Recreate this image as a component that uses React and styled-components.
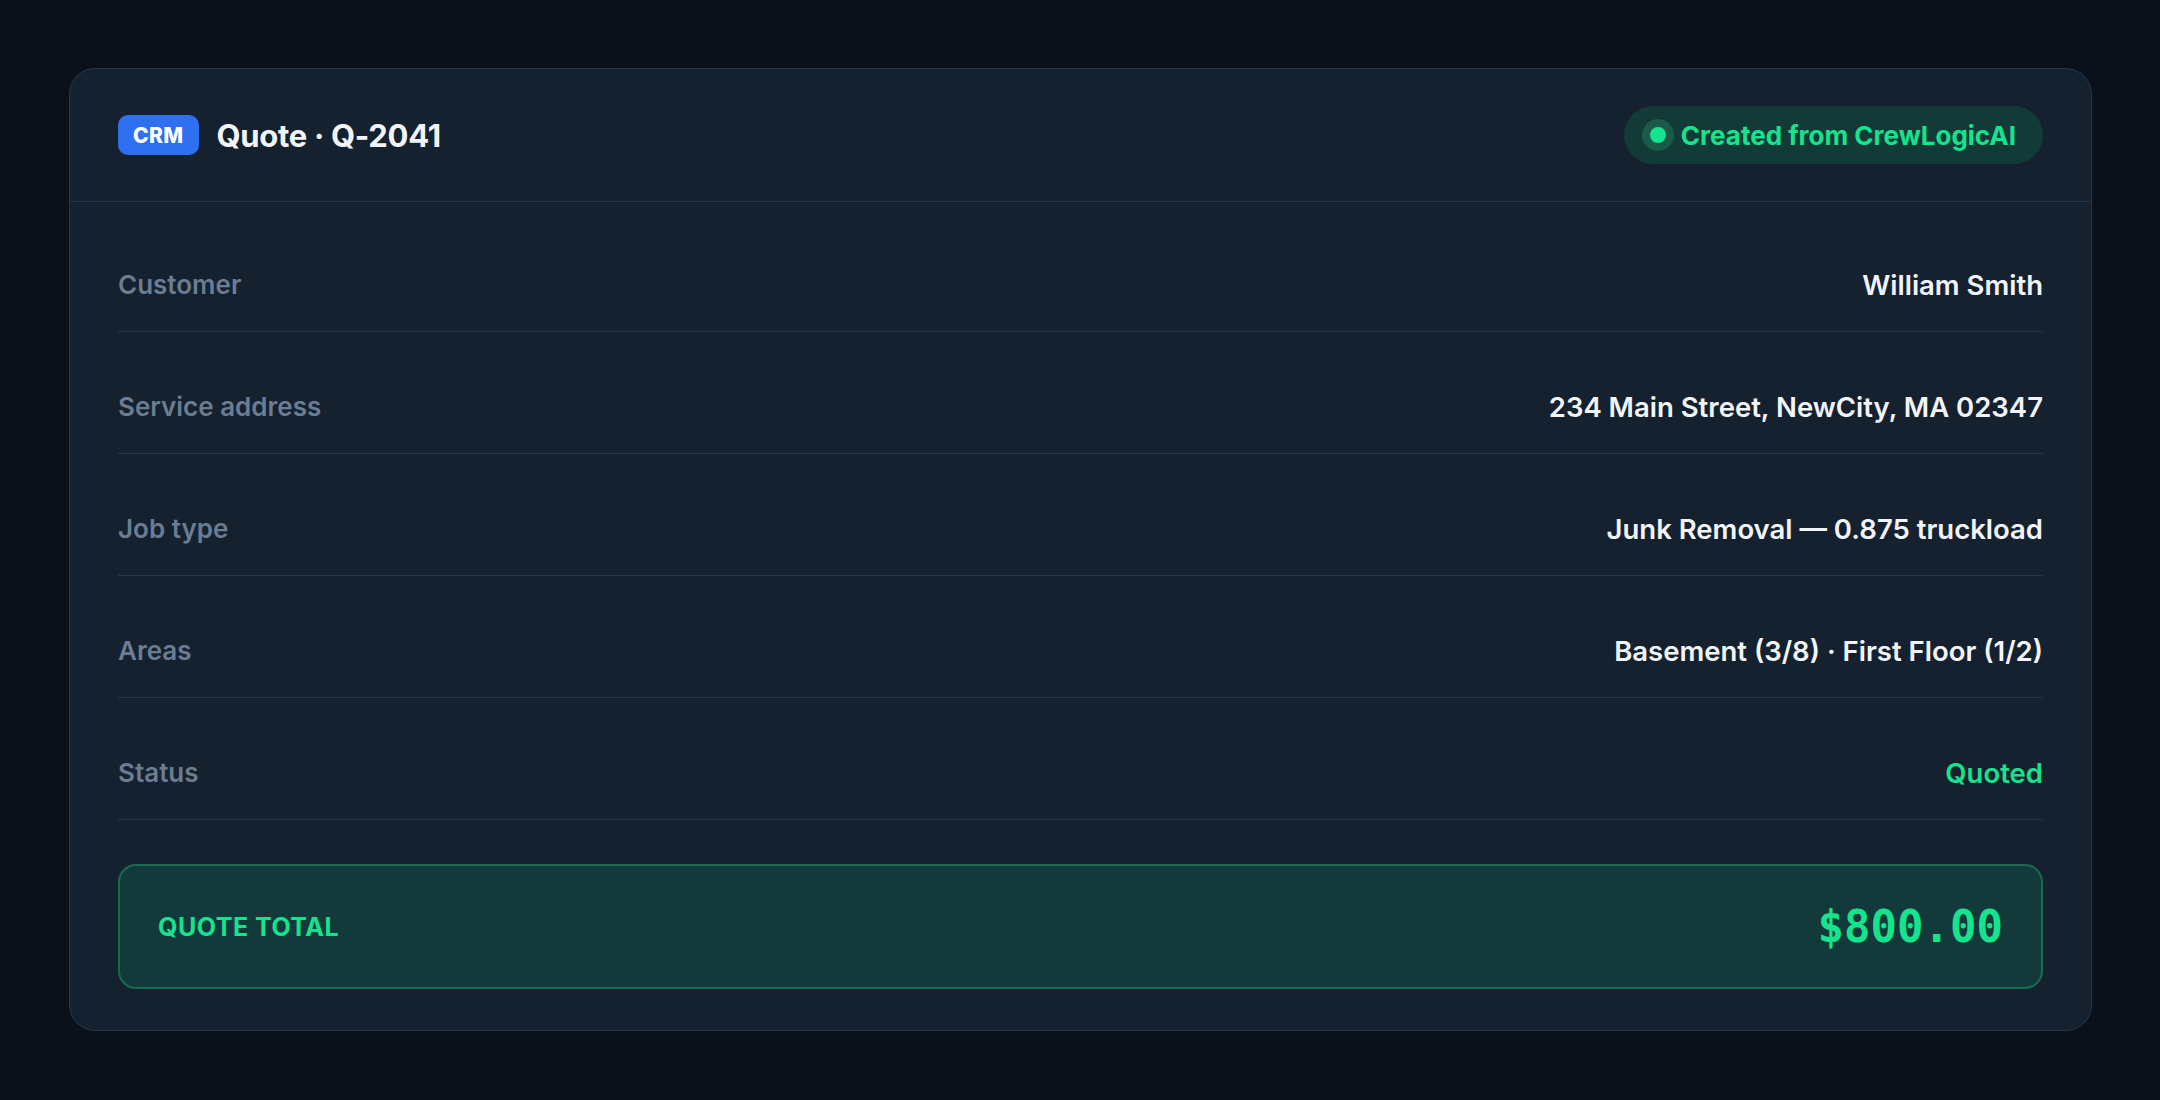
import React from 'react';
import styled, { createGlobalStyle } from 'styled-components';

const GlobalStyle = createGlobalStyle`
  * {
    box-sizing: border-box;
  }

  body {
    margin: 0;
    background-color: #0b111a;
    font-family: Inter, "Noto Sans", "Liberation Sans", sans-serif;
    -webkit-font-smoothing: antialiased;
  }
`;

const Page = styled.div`
  min-height: 1100px;
  padding: 68px 68px 68px 69px;
`;

const Card = styled.section`
  background-color: #16212f;
  border: 1px solid #26364c;
  border-radius: 26px;
  overflow: hidden;
`;

const Header = styled.header`
  display: flex;
  align-items: center;
  justify-content: space-between;
  padding: 37px 48px;
  border-bottom: 1px solid #26364c;
`;

const TitleGroup = styled.div`
  display: flex;
  align-items: center;
  gap: 18px;
`;

const Badge = styled.span`
  display: inline-flex;
  align-items: center;
  height: 40px;
  padding: 0 15px;
  border-radius: 10px;
  background-color: #2f70f2;
  color: #ffffff;
  font-size: 21px;
  font-weight: 800;
  letter-spacing: 0.02em;
`;

const Title = styled.h1`
  margin: 0;
  color: #f1f5f9;
  font-size: 31px;
  font-weight: 700;
  letter-spacing: -0.01em;
`;

const SourcePill = styled.div`
  display: flex;
  align-items: center;
  gap: 15px;
  height: 58px;
  padding: 0 27px 0 26px;
  border-radius: 29px;
  background-color: #123a37;
  color: #16e38d;
  font-size: 26px;
  font-weight: 700;
`;

const Dot = styled.span`
  width: 16px;
  height: 16px;
  border-radius: 50%;
  background-color: #16e38d;
  box-shadow: 0 0 0 8px #1a5a49;
`;

const Body = styled.div`
  display: flex;
  flex-direction: column;
  gap: 30px;
  padding: 38px 48px 41px;
`;

const Row = styled.div`
  display: flex;
  align-items: center;
  justify-content: space-between;
  padding: 28px 0 29px;
  border-bottom: 1px solid #26364c;
  line-height: 34px;
`;

const Label = styled.span`
  color: #6b7d93;
  font-size: 26px;
  font-weight: 600;
`;

const Value = styled.span`
  color: ${props => (props.accent ? '#16e38d' : '#f1f5f9')};
  font-size: 27.5px;
  font-weight: 600;
`;

const Total = styled.div`
  display: flex;
  align-items: center;
  justify-content: space-between;
  margin-top: 14px;
  height: 125px;
  padding: 0 38px;
  border: 2px solid #1b6a50;
  border-radius: 18px;
  background-color: #133a3b;
`;

const TotalLabel = styled.span`
  color: #16e38d;
  font-size: 25px;
  font-weight: 700;
  letter-spacing: 0.02em;
`;

const TotalAmount = styled.span`
  color: #16e38d;
  font-family: "DejaVu Sans Mono", "Liberation Mono", monospace;
  font-size: 44px;
  font-weight: 700;
`;

const fields = [
  { label: 'Customer', value: 'William Smith' },
  { label: 'Service address', value: '234 Main Street, NewCity, MA 02347' },
  { label: 'Job type', value: 'Junk Removal — 0.875 truckload' },
  { label: 'Areas', value: 'Basement (3/8) · First Floor (1/2)' },
  { label: 'Status', value: 'Quoted', accent: true },
];

function App() {
  return (
    <>
      <GlobalStyle />
      <Page>
        <Card>
          <Header>
            <TitleGroup>
              <Badge>CRM</Badge>
              <Title>Quote · Q-2041</Title>
            </TitleGroup>
            <SourcePill>
              <Dot />
              Created from CrewLogicAI
            </SourcePill>
          </Header>
          <Body>
            {fields.map(field => (
              <Row key={field.label}>
                <Label>{field.label}</Label>
                <Value accent={field.accent}>{field.value}</Value>
              </Row>
            ))}
            <Total>
              <TotalLabel>QUOTE TOTAL</TotalLabel>
              <TotalAmount>$800.00</TotalAmount>
            </Total>
          </Body>
        </Card>
      </Page>
    </>
  );
}

export default App;
